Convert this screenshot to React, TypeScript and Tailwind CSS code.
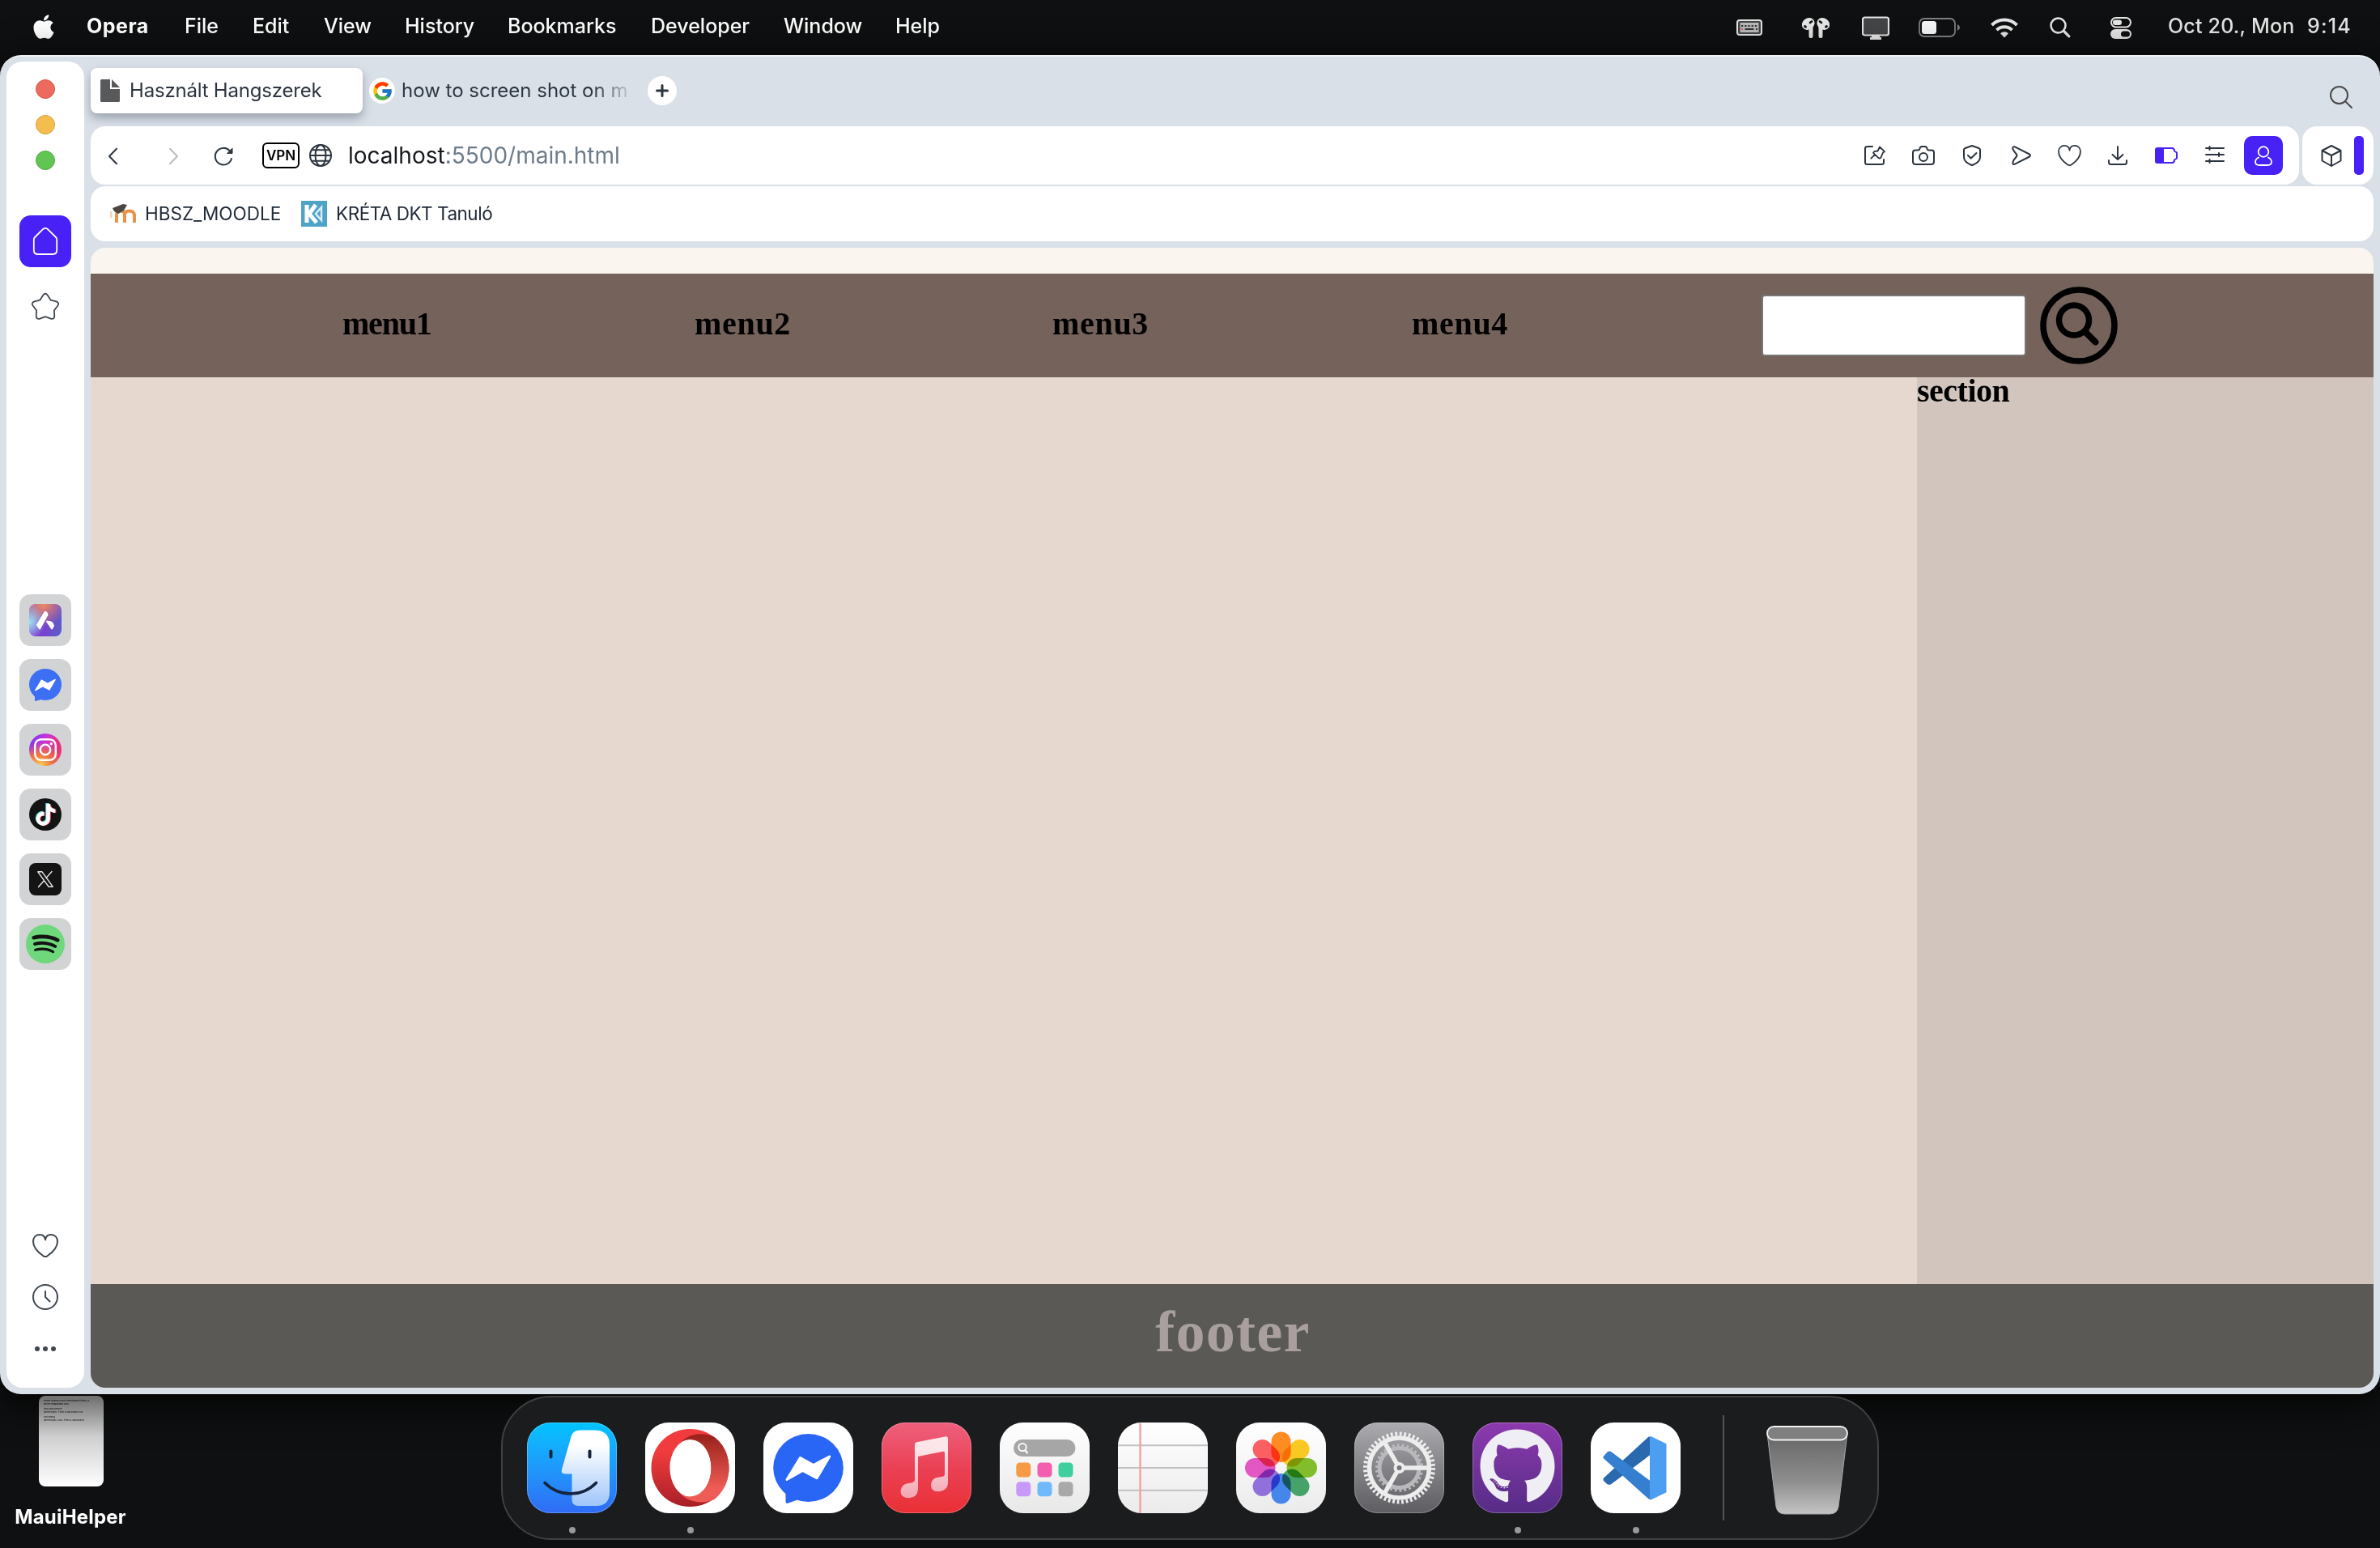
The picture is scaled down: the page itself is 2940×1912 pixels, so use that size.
import type { ReactNode } from "react";
import { FaApple, FaGithub, FaSpotify, FaTiktok } from "react-icons/fa";
import { FcGoogle } from "react-icons/fc";

type IconProps = { w: number; h: number; box?: string; className?: string; children: ReactNode };

function Line({ w, h, box, className = "", children }: IconProps) {
  return (
    <svg
      width={w}
      height={h}
      viewBox={box ?? `0 0 ${w} ${h}`}
      fill="none"
      stroke="currentColor"
      strokeWidth="2"
      strokeLinecap="round"
      strokeLinejoin="round"
      className={`shrink-0 overflow-visible ${className}`}
    >
      {children}
    </svg>
  );
}

/* ---------- Menu bar ---------- */

const menus = [
  { label: "Opera", cls: "w-[121px] font-bold tracking-[0.500px]" },
  { label: "File", cls: "w-[84px]" },
  { label: "Edit", cls: "w-[88px]" },
  { label: "View", cls: "w-[100px]" },
  { label: "History", cls: "w-[127px]" },
  { label: "Bookmarks", cls: "w-[177px]" },
  { label: "Developer", cls: "w-[164px]" },
  { label: "Window", cls: "w-[138px]" },
  { label: "Help", cls: "w-[80px]" },
];

function MenuBar() {
  return (
    <header className="flex h-[68px] items-center justify-between text-[25px] leading-none font-medium text-white">
      <nav className="flex h-[64px] items-center pl-[37px]">
        <div className="flex w-[70px] items-center">
          <FaApple className="-mt-[3px] h-[34px] w-[34px]" />
        </div>
        {menus.map((m) => (
          <span key={m.label} className={`-mt-[3px] whitespace-nowrap ${m.cls}`}>
            {m.label}
          </span>
        ))}
      </nav>
      <div className="flex h-[64px] items-center pr-[32px] text-[#e6e6e6]">
        <svg width="32" height="20" viewBox="0 0 32 20" className="mr-[49px]">
          <rect x="1" y="1" width="30" height="18" rx="3" fill="#444" stroke="#e6e6e6" strokeWidth="2" />
          <rect x="4.500" y="4" width="23" height="12" fill="#b9b9b9" />
          <path d="M6 8h20" stroke="#333" strokeWidth="2.200" strokeDasharray="2.200 2" />
          <path d="M6 12h2" stroke="#e05a50" strokeWidth="2.200" />
          <path d="M10.500 12h11M24 12h2" stroke="#333" strokeWidth="2.200" />
        </svg>
        <svg width="34" height="25" viewBox="0 0 34 25" className="mr-[40px]" fill="currentColor">
          <ellipse cx="7.700" cy="7.500" rx="8.200" ry="7" transform="rotate(-35 7.700 7.500)" />
          <ellipse cx="26.300" cy="7.500" rx="8.200" ry="7" transform="rotate(35 26.300 7.500)" />
          <path d="M8.500 14.500l5-4V23q0 2-2 2h-1q-2 0-2-2zM25.500 14.500l-5-4V23q0 2 2 2h1q2 0 2-2z" />
          <path d="M10 6l2-1.500M3.500 10.500l1 .7M24 6l-2-1.500M30.500 10.500l-1 .7" stroke="#101112" strokeWidth="2.800" strokeLinecap="round" />
        </svg>
        <svg width="34" height="30" viewBox="0 0 34 30" className="mt-[2px] mr-[36px]">
          <path d="M12 22h10v4h2v3H10v-3h2z" fill="#e6e6e6" />
          <rect x="1" y="1.500" width="32" height="22" rx="2.500" fill="#444547" stroke="#e6e6e6" strokeWidth="2.200" />
        </svg>
        <svg width="51" height="24" viewBox="0 0 51 24" className="mr-[38px]">
          <rect x="1" y="1" width="44" height="22" rx="6" fill="none" stroke="#7f7f81" strokeWidth="1.800" />
          <rect x="4" y="4" width="18" height="16" rx="3.500" fill="#f5f6f8" />
          <path d="M48 8q3 1.500 3 4t-3 4z" fill="#7f7f81" />
        </svg>
        <svg width="34" height="26" viewBox="0 0 34 26" className="mr-[39px]" fill="none" stroke="#e6e6e6" strokeWidth="4">
          <path d="M1.500 10a22 22 0 0 1 31 0" />
          <path d="M7.500 16.200a13.500 13.500 0 0 1 19 0" />
          <path d="M17 25.500l-5-5.300a7.200 7.200 0 0 1 10 0z" fill="#e6e6e6" stroke="none" />
        </svg>
        <svg width="26" height="26" viewBox="0 0 26 26" className="mr-[49px]" fill="none" stroke="#e6e6e6" strokeLinecap="round">
          <circle cx="10.500" cy="10.500" r="9" strokeWidth="2.500" />
          <path d="M17.500 17.500l6.300 6.300" strokeWidth="3.200" />
        </svg>
        <svg width="26" height="27" viewBox="0 0 26 27" className="mr-[45px]">
          <rect x="1" y="1" width="24" height="11.500" rx="5.700" fill="none" stroke="#e6e6e6" strokeWidth="2" />
          <rect x="3" y="3.500" width="11" height="6.500" rx="3.200" fill="#e6e6e6" />
          <rect x="0" y="15" width="26" height="12" rx="6" fill="#e6e6e6" />
          <rect x="13" y="17.500" width="11" height="7" rx="3.500" fill="#101112" />
        </svg>
        <span className="-mt-[3px] w-[172px] tracking-[0.200px] whitespace-nowrap">Oct 20., Mon</span>
        <span className="-mt-[3px] w-[58px] tracking-[1.200px] whitespace-nowrap">9:14</span>
      </div>
    </header>
  );
}

/* ---------- Sidebar ---------- */

function Tile({ children }: { children: ReactNode }) {
  return <div className="flex h-16 w-16 items-center justify-center rounded-[14px] bg-[#d2d3d5]">{children}</div>;
}

const boltPath = "M29.500 70.500L46 43.500L62.400 52.500L82.200 42L66.500 68.800L49 59.500Z";

function Sidebar() {
  return (
    <aside className="flex w-24 flex-col items-center rounded-[20px] bg-white pt-[22px] text-[#3f474f]">
      <div className="flex flex-col gap-5">
        <i className="h-6 w-6 rounded-full border border-[#d9594c] bg-[#ec6a5e]" />
        <i className="h-6 w-6 rounded-full border border-[#d8a13c] bg-[#f4be4f]" />
        <i className="h-6 w-6 rounded-full border border-[#52a940] bg-[#61c554]" />
      </div>
      <div className="mt-14 flex h-16 w-16 items-center justify-center rounded-[14px] bg-[#4721f5] text-white">
        <Line w={30} h={34}>
          <path d="M12.500 1.700q2.500-1.800 5 0L28 12q1.200 1.200 1.200 3v13q0 5-5 5H5.800q-5 0-5-5V15q0-1.800 1.200-3z" strokeWidth="1.800" />
        </Line>
      </div>
      <div className="flex h-[96px] items-center">
        <Line w={34} h={33}>
          <path d="M14.300 2.500q2.700-3.500 5.400 0l4 6.200 6.800 1.700q4.200 1.600 1.900 5.100l-4.500 6 .4 6.700q-.2 4.500-4.500 3.500L17 29.200l-6.800 2.500q-4.300 1-4.500-3.500l.4-6.700-4.500-6q-2.300-3.500 1.900-5.100l6.800-1.700z" strokeWidth="1.800" />
        </Line>
      </div>
      <div className="mt-[308px] flex flex-col gap-4">
        <Tile>
          <div className="h-10 w-10 overflow-hidden rounded-[8px] bg-[radial-gradient(circle_at_0%_55%,#9be3f0_0%,transparent_45%),radial-gradient(circle_at_45%_0%,#f08c5a_0%,transparent_60%),linear-gradient(100deg,#8f6ad8_0%,#7a3fd0_45%,#5a5fc8_100%)]">
            <svg width="40" height="40" viewBox="0 0 40 40" fill="#fff" stroke="#fff" strokeLinejoin="round" strokeWidth="2">
              <path d="M19.500 10q2.500 0 3 3.500L13 30.500l-3-4.500z" />
              <path d="M22 21.500q7 0 8 5.500l-2 3.500z" />
            </svg>
          </div>
        </Tile>
        <Tile>
          <svg width="40" height="40" viewBox="13 13 86 86">
            <ellipse cx="56" cy="55" rx="43" ry="42" fill="#3d6ff5" />
            <path d="M28 78V99L44 95Z" fill="#3d6ff5" />
            <path d={boltPath} fill="#fff" stroke="#fff" strokeWidth="3" strokeLinejoin="round" />
          </svg>
        </Tile>
        <Tile>
          <div className="flex h-10 w-10 items-center justify-center rounded-full bg-[radial-gradient(circle_at_35%_100%,#fbd25a_0%,#f0753f_30%,transparent_62%),linear-gradient(110deg,#7a30f8_5%,#c534dd_40%,#e8337a_75%)]">
            <svg width="28" height="28" viewBox="0 0 28 28" fill="none" stroke="#fff" strokeWidth="2.400">
              <rect x="1.200" y="1.200" width="25.600" height="25.600" rx="7.500" />
              <circle cx="14" cy="14" r="6.200" />
              <circle cx="21.300" cy="6.700" r="1.700" fill="#fff" stroke="none" />
            </svg>
          </div>
        </Tile>
        <Tile>
          <div className="relative h-10 w-10 rounded-full bg-[#141414]">
            <FaTiktok className="absolute top-[6px] left-[7px] h-[27px] w-[25px] text-[#5fe3e0]" />
            <FaTiktok className="absolute top-[7px] left-[9px] h-[27px] w-[25px] text-[#ee3a58]" />
            <FaTiktok className="absolute top-[6.500px] left-[8px] h-[27px] w-[25px] text-white" />
          </div>
        </Tile>
        <Tile>
          <div className="flex h-10 w-10 items-center justify-center rounded-[8px] bg-[#141414] text-[#ececec]">
            <Line w={20} h={20}>
              <path d="M.8.8H6L19.200 19.200H14ZM18 .5L11 8.400M8.600 11.500L1.500 19.500" strokeWidth="1.400" />
            </Line>
          </div>
        </Tile>
        <Tile>
          <div className="flex h-12 w-12 items-center justify-center rounded-full bg-[radial-gradient(circle,#141414_60%,transparent_61%)]">
            <FaSpotify className="h-12 w-12 scale-[1.030] text-[#6fd77c]" />
          </div>
        </Tile>
      </div>
      <div className="mt-[308px] flex flex-col items-center">
        <div className="flex h-16 items-center">
          <Line w={32} h={29}>
            <path d="M16 7.500C15.500 3 12.500 1 9 1C4 1 1 4.500 1 9.500C1 17 8 23.500 13.500 27.300q2.500 1.500 5 0C24 23.500 31 17 31 9.500C31 4.500 28 1 23 1C19.500 1 16.500 3 16 7.500Z" />
          </Line>
        </div>
        <div className="flex h-16 items-center">
          <Line w={32} h={32}>
            <circle cx="16" cy="16" r="15" />
            <path d="M16 9v7l5.500 5.500" />
          </Line>
        </div>
        <div className="flex h-16 items-center gap-1">
          <i className="h-1.5 w-1.5 rounded-full bg-[#3f474f]" />
          <i className="h-1.5 w-1.5 rounded-full bg-[#3f474f]" />
          <i className="h-1.5 w-1.5 rounded-full bg-[#3f474f]" />
        </div>
      </div>
    </aside>
  );
}

/* ---------- Browser chrome ---------- */

function TabStrip() {
  return (
    <div className="flex h-20 items-start pt-2 text-[24px] leading-none text-[#2c353f]">
      <div className="flex h-14 w-[336px] items-center rounded-lg bg-white pl-3 shadow-[0_6px_12px_rgba(60,70,85,0.4)]">
        <svg width="24" height="28" viewBox="0 0 24 28" fill="#58595b" className="mr-[12px]">
          <path d="M1.500 0H12v12h12v14.500q0 1.500-1.500 1.500h-21Q0 28 0 26.500v-25Q0 0 1.500 0z" />
          <path d="M14 0l10 10H14z" />
        </svg>
        <span className="tracking-[-0.200px] whitespace-nowrap">Használt Hangszerek</span>
      </div>
      <div className="ml-2 flex h-14 items-center">
        <div className="flex h-8 w-8 items-center justify-center rounded-full bg-white">
          <FcGoogle className="h-[27px] w-[27px]" />
        </div>
        <span className="ml-2 w-[278px] overflow-hidden bg-gradient-to-r from-[#2c353f] from-85% to-[#2c353f]/20 bg-clip-text leading-[1.400] whitespace-nowrap text-transparent">
          how to screen shot on m
        </span>
        <div className="ml-[26px] flex h-9 w-9 items-center justify-center rounded-full bg-white">
          <Line w={16} h={16}>
            <path d="M8 1.500v13M1.500 8h13" strokeWidth="3" />
          </Line>
        </div>
      </div>
      <div className="flex h-[72px] flex-1 items-center justify-end pr-[26px] text-[#4a4a4a]">
        <Line w={28} h={28}>
          <circle cx="11.500" cy="11.500" r="10.500" />
          <path d="M19 19l8 8" />
        </Line>
      </div>
    </div>
  );
}

function Slot({ children }: { children: ReactNode }) {
  return <div className="flex h-12 w-[60px] items-center justify-center">{children}</div>;
}

function Toolbar() {
  return (
    <div className="flex h-[72px] gap-1 text-[#2c353f]">
      <div className="flex flex-1 items-center rounded-[18px] bg-white pr-[20px] pl-[22px]">
        <Line w={11} h={20} className="mt-[2px]">
          <path d="M10 .8L1 10l9 9.200" />
        </Line>
        <Line w={11} h={20} className="mt-[2px] ml-[64px] text-[#b9bcc0]">
          <path d="M1 .8L10 10l-9 9.200" />
        </Line>
        <Line w={24} h={24} className="mt-[2px] ml-[44px]">
          <path d="M22 15a10.300 10.300 0 1 1-2.500-10" />
          <path d="M23 2.500v6h-6z" fill="currentColor" strokeWidth="1" />
        </Line>
        <div className="ml-[36px] flex h-8 w-[46px] items-center justify-center rounded-[6px] border-2 border-black text-[17px] leading-none font-semibold text-black">
          VPN
        </div>
        <Line w={28} h={28} className="ml-3">
          <circle cx="14" cy="14" r="13" />
          <ellipse cx="14" cy="14" rx="6.500" ry="13" />
          <path d="M1 14h26M3 7.300h22M3 20.700h22" />
        </Line>
        <span className="ml-[20px] text-[28px] leading-none whitespace-nowrap text-[#6d7b8a]">
          <b className="font-normal text-[#15181c]">localhost</b>:5500/main.html
        </span>
        <div className="ml-auto flex">
          <Slot>
            <Line w={26} h={24}>
              <path d="M10 1H3.500Q1 1 1 3.500v17Q1 23 3.500 23h18q2.500 0 2.500-2.500V17" />
              <path d="M19 1.500l6 5.700-2 1.300-2.700 6.300q-1.500 1.500-3 0l-6.300-6 1.200-1.600 4.300-.7 2.500-5zM12.800 11.200l-4.500 4.500" strokeWidth="1.800" />
            </Line>
          </Slot>
          <Slot>
            <Line w={28} h={24}>
              <path d="M4 5.500h3.500q1.500 0 1.800-1.500.5-3 3-3h3.400q2.500 0 3 3Q19 5.500 20.500 5.500H24q3 0 3 3v11q0 3.500-3.500 3.500h-19Q1 23 1 19.500v-11q0-3 3-3z" />
              <circle cx="14" cy="14" r="5" />
            </Line>
          </Slot>
          <Slot>
            <Line w={22} h={26}>
              <path d="M11 1l9 3.300q1 .5 1 1.700v9q0 6-8.500 9.500-1.500.8-3 0Q1 21 1 15V6q0-1.200 1-1.700z" />
              <path d="M6 13l3.700 3.500L16.500 10" />
            </Line>
          </Slot>
          <Slot>
            <Line w={24} h={24} className="ml-[2px]">
              <path d="M3.500 1.200L22 10.500q2 1.500 0 3L3.500 22.800Q1 23.500 1.500 20.500q.5-3 4-6.500 2-2 0-4Q2 6 1.300 3.500 1 .8 3.500 1.200z" />
            </Line>
          </Slot>
          <Slot>
            <Line w={29} h={26} box="0 0 32 29">
              <path d="M16 7.500C15.500 3 12.500 1 9 1C4 1 1 4.500 1 9.500C1 17 8 23.500 13.500 27.300q2.500 1.500 5 0C24 23.500 31 17 31 9.500C31 4.500 28 1 23 1C19.500 1 16.500 3 16 7.500Z" />
            </Line>
          </Slot>
          <Slot>
            <Line w={24} h={24}>
              <path d="M12 1v16M5.500 11l6.500 6 6.500-6M1 18v2.500Q1 23 3.500 23h17q2.500 0 2.500-2.500V18" />
            </Line>
          </Slot>
          <Slot>
            <Line w={28} h={20} className="text-[#4721f5]">
              <path d="M3 1h18q3 0 3 3.500l3 2v7l-3 2Q24 19 21 19H3q-2 0-2-2V3q0-2 2-2z" />
              <path d="M2 2h8v16H2z" fill="currentColor" />
            </Line>
          </Slot>
          <Slot>
            <Line w={24} h={22} className="-mt-[2px]">
              <path d="M1 3h22M1 11h22M1 19h22M5.500 1v4M17 9v4M5.500 17v4" />
            </Line>
          </Slot>
          <div className="ml-[6px] flex h-12 w-12 items-center justify-center rounded-[10px] bg-[#4721f5] text-white">
            <Line w={22} h={25}>
              <circle cx="11" cy="7.500" r="6.300" strokeWidth="1.800" />
              <path d="M5 14.500Q1 16.500 1 20q0 4 5 4h10q5 0 5-4 0-3.500-4-5.500" strokeWidth="1.800" />
            </Line>
          </div>
        </div>
      </div>
      <div className="flex w-[88px] items-center justify-end rounded-[18px] bg-white pr-3">
        <Line w={26} h={27} className="mr-[15px]">
          <path d="M13 1l11.500 6v12.500L13 26 1.500 19.500V7zM1.500 7L13 13l11.500-6M13 13v13" />
        </Line>
        <i className="h-12 w-3 rounded-[5px] bg-[#4721f5]" />
      </div>
    </div>
  );
}

function Bookmarks() {
  return (
    <div className="mt-0.5 flex h-[68px] items-center rounded-[18px] bg-white pl-6 text-[22.500px] leading-none text-[#1f2937]">
      <svg width="32" height="32" viewBox="0 0 32 32">
        <path d="M8 27V17q0-4.500 5-4.500t5 4.500v10M18 27V17q0-4.500 5.500-4.500T30 17v10" fill="none" stroke="#e8924a" strokeWidth="4" />
        <path d="M1 13v8" stroke="#f6d3bd" strokeWidth="3" />
        <path d="M3 9l13-5 5 1-4 7-7 4-5-3z" fill="#4a4644" />
      </svg>
      <span className="ml-[11px] w-[193px] whitespace-nowrap">HBSZ_MOODLE</span>
      <svg width="32" height="32" viewBox="0 0 32 32">
        <rect width="32" height="32" fill="#4fa3c7" />
        <path d="M7 5v22M18 5l-8 11 9 11" fill="none" stroke="#fff" strokeWidth="5" />
        <path d="M25 8l-7 8 7 8z" fill="none" stroke="#d8eef6" strokeWidth="2.500" />
      </svg>
      <span className="ml-[11px] tracking-[-0.480px] whitespace-nowrap">KRÉTA DKT Tanuló</span>
    </div>
  );
}

/* ---------- Page shown in the tab ---------- */

function Page() {
  return (
    <main className="mt-2 flex flex-1 flex-col overflow-hidden rounded-[18px] font-['Liberation_Serif',serif] text-[40px] leading-none font-bold text-black">
      <div className="h-8 bg-[#faf6ef]" />
      <nav className="flex h-32 items-center bg-[#74625b] pl-[311px]">
        <span className="-mt-[5px] w-[435px] tracking-[-1.200px]">menu1</span>
        <span className="-mt-[5px] w-[442px] tracking-[0.700px]">menu2</span>
        <span className="-mt-[5px] w-[444px] tracking-[0.700px]">menu3</span>
        <span className="-mt-[5px] w-[432px] tracking-[0.700px]">menu4</span>
        <input className="h-[76px] w-[327px] rounded-[4px] border-2 border-[#767676] bg-white" />
        <svg width="96" height="96" viewBox="0 0 96 96" fill="none" stroke="#000" className="ml-[17px]">
          <circle cx="48" cy="48" r="44" strokeWidth="7.500" />
          <circle cx="42" cy="41.500" r="18.500" strokeWidth="7.500" />
          <path d="M55 55l13.500 13.500" strokeWidth="8" strokeLinecap="round" />
        </svg>
      </nav>
      <div className="flex flex-1">
        <article className="w-4/5 bg-[#e6d8cf]" />
        <section className="w-1/5 bg-[#d2c5be]">
          <p className="-mt-[3px] tracking-[-0.500px]">section</p>
        </section>
      </div>
      <footer className="flex h-32 items-center justify-center bg-[#5a5956] pb-2.5 pl-0.5 text-[72px] tracking-[1.300px] text-[#a89f9e]">
        footer
      </footer>
    </main>
  );
}

/* ---------- Dock ---------- */

function AppIcon({ bg, running, children }: { bg: string; running?: boolean; children: ReactNode }) {
  return (
    <div className="flex w-[111px] flex-col items-center">
      <div className={`h-28 w-[111px] overflow-hidden rounded-[29px] shadow-[inset_0_0_0_1px_rgba(255,255,255,0.25)] ${bg}`}>
        <svg width="111" height="112" viewBox="0.500 0 111 112">
          {children}
        </svg>
      </div>
      <i className={`mt-[17px] h-2 w-2 rounded-full ${running ? "bg-[#98999b]" : "bg-transparent"}`} />
    </div>
  );
}

const petals = ["#fd8c22", "#f9c822", "#82bd2c", "#45a36a", "#4486ea", "#9270dc", "#e257c4", "#f95f63"];
const appDots = [
  { x: 20.8, y: 49.5, c: "#f79a45" },
  { x: 47, y: 49.5, c: "#f25fae" },
  { x: 73, y: 49.5, c: "#3fcf9f" },
  { x: 20.8, y: 73.3, c: "#c79afa" },
  { x: 47, y: 73.3, c: "#6fb9fc" },
  { x: 73, y: 73.3, c: "#a9a9a9" },
];

function Dock() {
  return (
    <div className="mt-[2px] flex h-[178px] w-[1702px] items-start rounded-[62px] border-2 border-[#3f4041] bg-[#1b1c1d] pt-[31px] pl-[30px]">
      <div className="flex gap-[35px]">
        <AppIcon running bg="bg-linear-to-b from-[#00c3ff] to-[#2f6bf5]">
          <defs>
            <linearGradient id="face" x1="0" y1="0" x2="0" y2="1">
              <stop offset=".2" stopColor="#fff" />
              <stop offset="1" stopColor="#9fc6fb" />
            </linearGradient>
          </defs>
          <path d="M66 9.500H84Q102.500 9.500 102.500 28V86Q102.500 103 86 103H64Q56 103 56 95V63.500H48Q42 63.500 43.500 58L55 17.500Q57 9.500 66 9.500Z" fill="url(#face)" />
          <path d="M30 35.500v7M78 35.500v7" stroke="#16253c" strokeWidth="4" strokeLinecap="round" />
          <path d="M22.500 74.500Q36 88 54.400 88T86 74.500" fill="none" stroke="#16253c" strokeWidth="3.600" strokeLinecap="round" />
        </AppIcon>
        <AppIcon running bg="bg-white">
          <defs>
            <linearGradient id="ringLeft" x1="0" y1="0" x2="0" y2="1">
              <stop offset=".3" stopColor="#f03c3e" />
              <stop offset="1" stopColor="#a81f26" />
            </linearGradient>
            <linearGradient id="ringRight" x1="0" y1="0" x2="0" y2="1">
              <stop offset="0" stopColor="#97211a" />
              <stop offset=".8" stopColor="#ef5c56" />
            </linearGradient>
          </defs>
          <path fillRule="evenodd" fill="url(#ringLeft)" d="M56 8C83 8 104 29 104 56S83 104 56 104S8 83 8 56S29 8 56 8ZM56.500 21C42 21 31 37 31 56S42 92 56.500 92S82 75 82 56S71 21 56.500 21Z" />
          <path fill="url(#ringRight)" d="M45 24C56 13 72 12 86 18C98 27 104 41 104 56C104 71 98 85 86 95C72 101 56 99 45 89C63 98 82 82 82 56C82 30 63 14 45 24Z" />
        </AppIcon>
        <AppIcon bg="bg-white">
          <ellipse cx="56" cy="56" rx="43.300" ry="42" fill="#2a66f6" />
          <path d="M28 82V97q0 4 4 2.300L44 95Z" fill="#2a66f6" />
          <path d={boltPath} fill="#fff" stroke="#fff" strokeWidth="3" strokeLinejoin="round" />
        </AppIcon>
        <AppIcon bg="bg-linear-to-b from-[#ee5f7c] via-[#ea4054] to-[#ea2f34]">
          <defs>
            <linearGradient id="note" x1="0" y1="0" x2="0" y2="1">
              <stop offset=".2" stopColor="#fde6ea" />
              <stop offset="1" stopColor="#f3a5b2" />
            </linearGradient>
          </defs>
          <path d="M44 24.200L80 17.300Q82.500 17 82.500 20V74Q82.500 84.500 70 85.300Q61.500 85 61.500 77Q62 68 72 67.500Q78.500 67 78.500 64V37.500Q78.500 35.300 76.500 35.700L45.500 42V82Q45 93 34.500 93.300Q24 93 24 85Q24.500 76 34 75Q41.500 74 41.500 71V27Q41.500 24.500 44 24.200Z" fill="url(#note)" />
        </AppIcon>
        <AppIcon bg="bg-linear-to-b from-white to-[#e8e8e8]">
          <rect x="17.500" y="21" width="76.500" height="21" rx="10.500" fill="#a6a6a6" />
          <circle cx="28.500" cy="30.500" r="4.700" fill="none" stroke="#fff" strokeWidth="1.800" />
          <path d="M32 34.500l2.500 3" stroke="#fff" strokeWidth="2.200" strokeLinecap="round" />
          {appDots.map((d) => (
            <rect key={d.c} x={d.x} y={d.y} width="18" height="18" rx="4.500" fill={d.c} />
          ))}
        </AppIcon>
        <AppIcon bg="bg-linear-to-b from-white to-[#ebebeb]">
          <path d="M0 28.300h112M0 56h112M0 83.800h112" stroke="#c2c2c2" strokeWidth="2" />
          <path d="M28 1v111" stroke="#f0a3a3" strokeWidth="2.400" />
        </AppIcon>
        <AppIcon bg="bg-linear-to-b from-white to-[#ebebeb]">
          <g className="isolate">
            {petals.map((c, i) => (
              <rect key={c} x="44" y="11.500" width="24" height="37.500" rx="12" fill={c} transform={`rotate(${i * 45} 56 56)`} className="mix-blend-multiply" />
            ))}
          </g>
        </AppIcon>
        <AppIcon bg="bg-linear-to-b from-[#acabb0] to-[#5e5d62]">
          <g fill="none">
            <circle cx="56" cy="56" r="24.500" stroke="#b9b9bc" strokeWidth="5" />
            <circle cx="56" cy="56" r="28" stroke="#b9b9bc" strokeWidth="3.500" strokeDasharray="2.800 3.064" />
            <circle cx="56" cy="56" r="37" stroke="#ededee" strokeWidth="5.500" />
            <circle cx="56" cy="56" r="42" stroke="#ededee" strokeWidth="5" strokeDasharray="2.800 2.697" />
            <path d="M56 56H92M56 56L38 24.800M56 56L38 87.200" stroke="#ededee" strokeWidth="5.500" />
          </g>
          <circle cx="56" cy="56" r="7" fill="#ededee" />
          <circle cx="56" cy="56" r="3" fill="#77767b" />
        </AppIcon>
        <AppIcon running bg="bg-linear-to-b from-[#8d3aae] to-[#562c86]">
          <FaGithub x="8.500" y="7" size="95" color="#eeeef4" />
        </AppIcon>
        <AppIcon running bg="bg-white">
          <g strokeLinejoin="round" strokeWidth="2">
            <path d="M17 69.500L72.500 18.500L75 38L25 75.500Q22.500 76.500 20.500 74.500L17 71Z" fill="#2a69ae" stroke="#2a69ae" />
            <path d="M17 42.500L21.500 37.500Q23.500 35.500 26 37.500L75 74V94L72.500 93.500L17 43.500Z" fill="#357fd0" stroke="#357fd0" />
            <path d="M74.500 18L93 27V85.500L74.500 94.500Z" fill="#4c9ff0" stroke="#4c9ff0" />
          </g>
        </AppIcon>
      </div>
      <i className="mt-[-9px] ml-[52px] h-[130px] w-[2px] bg-[#525355]" />
      <svg width="101" height="110" viewBox="0 0 101 110" className="mt-[4px] ml-[52px]">
        <defs>
          <linearGradient id="bin" x1="0" y1="0" x2="0" y2="1">
            <stop offset=".1" stopColor="#6c6c6c" />
            <stop offset=".6" stopColor="#8e8e8e" />
            <stop offset="1" stopColor="#c4c4c4" />
          </linearGradient>
        </defs>
        <path d="M1 9L12 100q1.500 9 11 9h55q9.500 0 11-9L100 9z" fill="url(#bin)" stroke="#a8a8a8" strokeWidth="1" />
        <rect x="1" y="1" width="99" height="16.500" rx="8.250" fill="#808080" stroke="#f2f2f2" strokeWidth="1.800" />
      </svg>
    </div>
  );
}

function DesktopFile() {
  return (
    <div className="flex w-[174px] flex-col items-center">
      <div className="mt-[2px] ml-[2px] h-28 w-20 rounded-lg bg-linear-to-b from-[#6e6e6e] via-[#cfcfcf] via-45% to-white pt-[5px] pl-[6px] text-[2.600px] leading-[3.600px] whitespace-nowrap text-black">
        <p>Ezeket a parancsokat a terminálban futtasd, a</p>
        <p>projekt mappájában állva.</p>
        <p className="mt-[3px]">Mac Build Release:</p>
        <p>dotnet watch -f net8.0-maccatalyst run</p>
        <p className="mt-[3px]">Run Debug:</p>
        <p>dotnet build -t:Run -f net8.0-maccatalyst</p>
      </div>
      <span className="mt-[24px] text-[24px] leading-[28px] font-bold tracking-[0.200px] text-white">MauiHelper</span>
    </div>
  );
}

export default function App() {
  return (
    <div className="flex h-[1912px] w-[2940px] flex-col overflow-hidden bg-[#0f1011] font-['Inter',sans-serif]">
      <MenuBar />
      <div className="flex h-[1654px] gap-2 rounded-[26px] border-t-2 border-[#f0f3f6] bg-[#d9e0e8] px-2 pt-1.5 pb-2 shadow-[0_10px_50px_rgba(0,0,0,0.9)]">
        <Sidebar />
        <div className="flex flex-1 flex-col">
          <TabStrip />
          <Toolbar />
          <Bookmarks />
          <Page />
        </div>
      </div>
      <div className="flex">
        <DesktopFile />
        <div className="ml-[445px]">
          <Dock />
        </div>
      </div>
    </div>
  );
}
